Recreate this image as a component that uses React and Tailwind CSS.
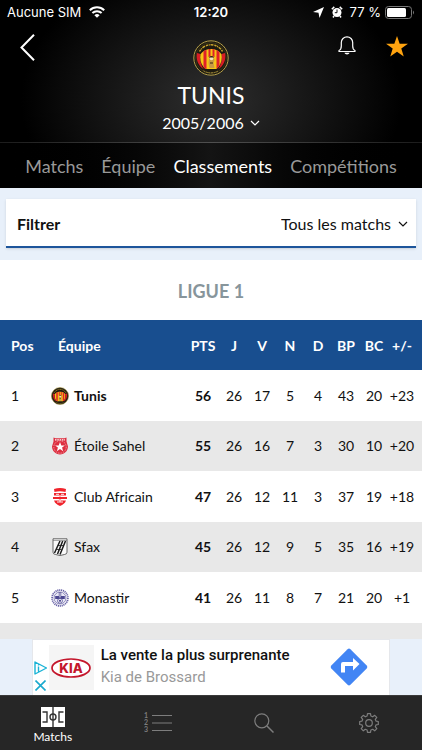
import React from "react";

const tabs = ["Matchs", "Équipe", "Classements", "Compétitions"];

const columns = ["PTS", "J", "V", "N", "D", "BP", "BC", "+/-"];

const TunisCrest = ({ className }) => (
  <svg viewBox="0 0 36 36" className={className} aria-hidden="true">
    <circle cx="18" cy="18" r="17.2" fill="#1d1a10" stroke="#b5a04a" strokeWidth="1" />
    <circle cx="18" cy="18" r="15.4" fill="none" stroke="#4d431d" strokeWidth="0.6" />
    {/* inscription around the shield */}
    <path d="M6.500 11.500a13.200 13.200 0 0 1 23 0" fill="none" stroke="#c9a52c" strokeWidth="1.500" strokeDasharray="2.2 0.7 1 0.8 3 0.9" />
    <path d="M10.500 30.800a14.600 14.600 0 0 0 15 0" fill="none" stroke="#a8903a" strokeWidth="1" strokeDasharray="2 0.6" />
    <path d="M4 13c-1.500 7 1.500 13 7 16.500-3-4-4.500-10-3.500-15.500zM32 13c1.500 7-1.500 13-7 16.500 3-4 4.500-10 3.500-15.500z" fill="#d91d24" />
    <clipPath id="tunis-shield">
      <path d="M7.500 14.500C10 10.500 14 9 18 9s8 1.500 10.500 5.500c1 6-1 11.500-5 14.500h-11C8.500 26 6.500 20.500 7.500 14.500z" />
    </clipPath>
    <g clipPath="url(#tunis-shield)">
      <rect x="6" y="8" width="24" height="22" fill="#f6c416" />
      <path d="M10.500 8h3v22h-3zM15.500 8h2v9h-2zM19.500 8h2v9h-2zM23.500 8h3v22h-3z" fill="#e0202a" />
      <path d="M16.500 16h4l1 4-1 3 1 5h-5l-1-5z" fill="#c99a45" />
      <circle cx="18.500" cy="18.500" r="1.800" fill="#f3e2c0" />
      <path d="M16 17.500c1-2 4-2 5 0zM17 22.500h3v1h-3z" fill="#3a2410" />
    </g>
  </svg>
);

const EtoileCrest = () => (
  <svg viewBox="0 0 18 18" className="size-[18px]" aria-hidden="true">
    <path d="M2.500.500l2 .8h9l2-.8v4l1.500 5c0 4.500-3.500 7.500-8 8-4.500-.5-8-3.500-8-8l1.500-5z" fill="#dd2f40" />
    <path d="M4 2.800h10" stroke="#fff" strokeWidth="1.200" strokeDasharray="1.500 0.800" />
    <circle cx="9" cy="10" r="6.200" fill="none" stroke="#f4b9be" strokeWidth="0.700" strokeDasharray="1.500 1" />
    <path d="M9 5l1.300 3.400h3.600l-2.800 2.200 1 3.600L9 12.100l-3.100 2.100 1-3.600-2.800-2.200h3.600z" fill="#fff" />
  </svg>
);

const AfricainCrest = () => (
  <svg viewBox="0 0 18 18" className="size-[18px]" aria-hidden="true">
    <path d="M3 1q6-2 12 0l-.5 3q-5.500-1.500-11 0zM3 5h12v2.500H3zM2 9h14v2H2zM3 12.500h12c-1 3-3 4-6 5.500-3-1.500-5-2.500-6-5.500z" fill="#f0242c" />
    <path d="M5 6.300h3M10 6.300h3M9 8v6M6 14h6" stroke="#fff" strokeWidth="0.900" />
    <circle cx="9" cy="10" r="1.500" fill="#f0242c" />
  </svg>
);

const SfaxCrest = () => (
  <svg viewBox="0 0 18 18" className="size-[18px]" aria-hidden="true">
    <path d="M2 .8h14v13.400q0 2-2.500 2.300L9 17.500l-4.500-1Q2 16.200 2 14.200z" fill="#fafafa" stroke="#444" strokeWidth="0.800" />
    <path d="M2 2.500h14" stroke="#555" strokeWidth="0.500" />
    <path d="M9 3L3.500 15M11.700 3L6.500 16M14.500 3L9 16.500" stroke="#1b1b1b" strokeWidth="1.500" />
    <path d="M7 7.500h5M5.500 11.500h5" stroke="#1b1b1b" strokeWidth="0.800" />
  </svg>
);

const MonastirCrest = () => (
  <svg viewBox="0 0 18 18" className="size-[18px]" aria-hidden="true">
    <circle cx="9" cy="9" r="7.900" fill="#fff" stroke="#6a64a8" strokeWidth="1.800" strokeDasharray="1.200 0.700" />
    <circle cx="9" cy="9" r="6" fill="#e9e8f6" stroke="#4a4590" strokeWidth="0.600" />
    <path d="M7.800 3h2.400v4h3.600v3H4.200V7h3.600z" fill="#4a4590" />
    <path d="M9 3.500v5" stroke="#fff" strokeWidth="0.900" />
    <circle cx="9" cy="11.800" r="2.400" fill="#fff" stroke="#4a4590" strokeWidth="0.800" />
    <path d="M9 10.600l1.200.9-.5 1.300H8.300l-.5-1.300z" fill="#4a4590" />
  </svg>
);

const teams = [
  { crest: <TunisCrest className="size-[18px]" />, name: "Tunis", stats: [56, 26, 17, 5, 4, 43, 20, "+23"], current: true },
  { crest: <EtoileCrest />, name: "Étoile Sahel", stats: [55, 26, 16, 7, 3, 30, 10, "+20"] },
  { crest: <AfricainCrest />, name: "Club Africain", stats: [47, 26, 12, 11, 3, 37, 19, "+18"] },
  { crest: <SfaxCrest />, name: "Sfax", stats: [45, 26, 12, 9, 5, 35, 16, "+19"] },
  { crest: <MonastirCrest />, name: "Monastir", stats: [41, 26, 11, 8, 7, 21, 20, "+1"] },
];

const Chevron = () => (
  <svg viewBox="0 0 10 6" className="w-[10px] h-[6px] shrink-0 pointer-events-none" fill="none" stroke="currentColor" strokeWidth="1.2" aria-hidden="true">
    <path d="M1 1l4 4 4-4" />
  </svg>
);

const StatusBar = () => (
  <div className="grid grid-cols-[1fr_auto_1fr] items-center h-6 px-[7px] font-['Inter',sans-serif] text-[13px] leading-4">
    <div className="flex items-center gap-2">
      <span>Aucune SIM</span>
      <svg viewBox="0 0 16 12" className="w-4 h-3" fill="none" stroke="#fff" strokeWidth="2" aria-hidden="true">
        <path d="M.8 4.300a10.300 10.300 0 0 1 14.400 0M3.400 7a6.600 6.600 0 0 1 9.200 0" />
        <path d="M8 11.800L5.400 9.200a3.700 3.700 0 0 1 5.200 0z" fill="#fff" stroke="none" />
      </svg>
    </div>
    <span className="font-semibold">12:20</span>
    <div className="flex items-center justify-end gap-[7px]">
      <svg viewBox="0 0 11 11" className="size-[11px]" fill="#fff" aria-hidden="true">
        <path d="M11 0L6.500 11 5.500 5.800 0 5z" />
      </svg>
      <svg viewBox="0 0 12 12" className="size-3" aria-hidden="true">
        <circle cx="6" cy="6.500" r="4.500" fill="#fff" />
        <path d="M.8 3.200L3.300.9M11.200 3.200L8.700.9M3 10l-1 1.500M9 10l1 1.500" stroke="#fff" strokeWidth="1.500" />
        <path d="M6 3.500v3.200H3.800" stroke="#111" strokeWidth="1" fill="none" />
      </svg>
      <span>77 %</span>
      <svg viewBox="0 0 30 13" className="w-[30px] h-[13px] -ml-[3px]" aria-hidden="true">
        <rect x=".5" y=".5" width="26" height="12" rx="3" fill="none" stroke="#777" />
        <rect x="2" y="2" width="19" height="9" rx="1.500" fill="#fff" />
        <path d="M28 4.500q2 2 0 4z" fill="#777" />
      </svg>
    </div>
  </div>
);

const Header = () => (
  <header className="bg-black bg-[radial-gradient(ellipse_190px_140px_at_50%_100px,#2e2e2e,#000)] text-white">
    <StatusBar />
    <div className="grid grid-cols-[82px_1fr_82px] h-[118px] px-3">
      <button type="button" aria-label="Retour" className="justify-self-start self-start p-2 pt-[10px]">
        <svg viewBox="0 0 15 27" className="w-[15px] h-[27px]" fill="none" stroke="#fff" strokeWidth="2" aria-hidden="true">
          <path d="M14 .7L1.500 13.500 14 26.300" />
        </svg>
      </button>
      <div className="flex flex-col items-center pt-4">
        <TunisCrest className="size-9" />
        <h1 className="mt-1 text-[23px] leading-[30px]">TUNIS</h1>
        <div className="relative flex items-center">
          <select aria-label="Saison" className="appearance-none field-sizing-content bg-transparent pr-[16px] text-base leading-[26px] outline-none">
            <option>2005/2006</option>
          </select>
          <span className="absolute right-0 pointer-events-none">
            <Chevron />
          </span>
        </div>
      </div>
      <div className="flex items-start justify-end gap-[30px] pt-3 pr-[2px]">
        <button type="button" aria-label="Notifications">
          <svg viewBox="0 0 18 20" className="w-[18px] h-5" fill="none" stroke="#fff" strokeWidth="1.200" aria-hidden="true">
            <path d="M1 15.500v-1c2-.8 2.300-2 2.300-4.500V6.500a5.700 5.700 0 0 1 11.400 0V10c0 2.500.3 3.700 2.300 4.500v1z" strokeLinejoin="round" />
            <path d="M6.500 16.800c.5 2.300 4.500 2.300 5 0z" fill="#fff" stroke="none" />
          </svg>
        </button>
        <button type="button" aria-label="Favori">
          <svg viewBox="0 0 24 23" className="w-[22px] h-[21px]" fill="#ffa30f" aria-hidden="true">
            <path d="M12 0l2.900 8.500H24l-7.300 5.300L19.400 22.500 12 17.200 4.600 22.500l2.700-8.700L0 8.500h9.100z" />
          </svg>
        </button>
      </div>
    </div>
    <div className="h-px bg-linear-to-r from-[#1c1c1c] via-[#505050] to-[#1c1c1c]" />
    <nav className="flex justify-center gap-[18px] h-[45px] bg-linear-to-r from-black via-[#141414] to-black text-lg leading-[46px] text-[#999]">
      {tabs.map((tab) => (
        <a key={tab} href="#" className={tab === "Classements" ? "text-white" : ""}>
          {tab}
        </a>
      ))}
    </nav>
  </header>
);

const FilterBar = () => (
  <div className="px-[6px] pt-[11px] pb-3">
    <div className="flex items-center justify-between h-[49px] pl-[11px] pr-2 pt-[2px] bg-white border-b-2 border-[#1d559b] shadow text-base">
      <label htmlFor="filter" className="font-bold">Filtrer</label>
      <div className="relative flex items-center">
        <select id="filter" className="appearance-none field-sizing-content bg-transparent pr-[17px] outline-none">
          <option>Tous les matchs</option>
        </select>
        <span className="absolute right-0 pointer-events-none">
          <Chevron />
        </span>
      </div>
    </div>
  </div>
);

const Standings = () => (
  <section className="bg-white">
    <h2 className="h-[60px] text-center text-lg leading-[62px] font-bold text-[#87959b]">LIGUE 1</h2>
    <table className="w-full table-fixed border-collapse text-sm">
      <colgroup>
        <col className="w-[51px]" />
        <col />
        <col className="w-[34px]" />
        <col className="w-7" />
        <col className="w-7" />
        <col className="w-7" />
        <col className="w-7" />
        <col className="w-7" />
        <col className="w-7" />
        <col className="w-[34px]" />
      </colgroup>
      <thead>
        <tr className="h-[50px] bg-[#184e8f] text-white">
          <th className="pl-[11px] pt-[2px] text-left font-bold">Pos</th>
          <th className="pl-[7px] pt-[2px] text-left font-bold">Équipe</th>
          {columns.map((column) => (
            <th key={column} className="pt-[2px] text-center font-bold last:pr-[6px]">{column}</th>
          ))}
        </tr>
      </thead>
      <tbody>
        {teams.map((team, index) => (
          <tr key={team.name} className="h-[51px] even:h-[50px] even:bg-[#e8e8e8]">
            <td className="pl-[11px]">{index + 1}</td>
            <td>
              <div className="flex items-center gap-[5px]">
                {team.crest}
                <span className={team.current ? "font-bold" : ""}>{team.name}</span>
              </div>
            </td>
            {team.stats.map((value, i) => (
              <td key={i} className="text-center whitespace-nowrap nth-3:font-bold last:pr-[6px]">
                {value}
              </td>
            ))}
          </tr>
        ))}
      </tbody>
    </table>
  </section>
);

const AdBanner = () => (
  <aside className="flex justify-center h-14 bg-[#e8f0fa] font-['Roboto',sans-serif]">
    <a href="#" className="flex items-center w-[85%] bg-white border border-b-0 border-gray-200">
      <span className="flex flex-col items-center gap-[5px] w-4 pt-4 shrink-0">
        <svg viewBox="0 0 13 14" className="w-[13px] h-[14px]" fill="none" stroke="#19b3d6" strokeWidth="1.400" aria-hidden="true">
          <path d="M1 1l11.500 6L1 13zM4.500 5.500v5M4.500 3.500v1" strokeLinejoin="round" />
        </svg>
        <svg viewBox="0 0 11 11" className="size-[11px]" stroke="#19a9ce" strokeWidth="1.600" aria-hidden="true">
          <path d="M.5.500l10 10M10.500.500l-10 10" />
        </svg>
      </span>
      <span className="flex items-center justify-center size-[45px] shrink-0 bg-[#f5f5f5]">
        <svg viewBox="0 0 40 20" className="w-10 h-5" aria-label="KIA">
          <ellipse cx="20" cy="10" rx="19" ry="9" fill="#fff" stroke="#c4172c" strokeWidth="1.700" />
          <text x="20" y="14.500" textAnchor="middle" fontFamily="Inter, sans-serif" fontWeight="800" fontSize="13" fill="#c4172c">KIA</text>
        </svg>
      </span>
      <span className="flex-1 min-w-0 pl-[7px] pb-[3px] whitespace-nowrap">
        <span className="block text-[15px] leading-[22px] font-medium">La vente la plus surprenante</span>
        <span className="block text-[15px] leading-[22px] text-[#999]">Kia de Brossard</span>
      </span>
      <svg viewBox="0 0 40 40" className="size-10 mr-[20px] mb-[2px] shrink-0" aria-hidden="true">
        <rect x="6.500" y="6.500" width="27" height="27" rx="2" transform="rotate(45 20 20)" fill="#4285f4" />
        <path d="M12 25.500v-8.500q0-2 2-2h10v-4l6.500 6-6.500 6.500v-4.500h-8v6.500z" fill="#fff" />
      </svg>
    </a>
  </aside>
);

const BottomNav = () => (
  <nav className="grid grid-cols-4 h-[55px] bg-[#262626] border-t border-[#3a3a3a] text-[#7d7d7d]">
    <button type="button" className="flex flex-col items-center pt-[11px] text-xs leading-4 text-white">
      <svg viewBox="0 0 24 20" className="w-6 h-5 mb-[2px]" aria-hidden="true">
        <rect width="24" height="20" fill="#fff" />
        <g fill="none" stroke="#333" strokeWidth="1.400">
          <path d="M12 0v20M1.500 5H6v10H1.500M22.500 5H18v10h4.500" />
          <circle cx="12" cy="10" r="3" />
        </g>
      </svg>
      Matchs
    </button>
    <button type="button" aria-label="Classements" className="flex items-start justify-center pt-4">
      <svg viewBox="0 0 28 21" className="w-7 h-[21px]" aria-hidden="true">
        <g fill="currentColor" fontFamily="Lato, sans-serif" fontSize="7" fontWeight="700">
          <text x="0" y="6">1</text>
          <text x="0" y="13">2</text>
          <text x="0" y="20">3</text>
        </g>
        <path d="M8 3.500h20M8 11h20M8 18.500h20" stroke="currentColor" />
      </svg>
    </button>
    <button type="button" aria-label="Rechercher" className="flex items-start justify-center pt-[17px]">
      <svg viewBox="0 0 20 20" className="size-5" fill="none" stroke="currentColor" strokeWidth="1.200" aria-hidden="true">
        <circle cx="7.800" cy="7.800" r="7" />
        <path d="M13 13l6.500 6.500" strokeWidth="1.500" />
      </svg>
    </button>
    <button type="button" aria-label="Réglages" className="flex items-start justify-center pt-[17px]">
      <svg viewBox="0 0 20 20" className="size-5" fill="none" stroke="currentColor" strokeWidth="1.200" strokeLinejoin="round" aria-hidden="true">
        <path d="M8.500.700h3l.4 2.300 1.800.8 2-1.500 2.100 2.100-1.500 2 .7 1.700 2.300.4v3l-2.300.4-.7 1.800 1.500 2-2.100 2.100-2-1.500-1.800.7-.4 2.300h-3l-.4-2.300-1.800-.7-2 1.500-2.100-2.100 1.500-2-.7-1.800L.700 11.500v-3L3 8.100l.7-1.700-1.500-2 2.100-2.100 2 1.500L8.100 3z" />
        <circle cx="10" cy="10" r="3.300" />
      </svg>
    </button>
  </nav>
);

const App = () => {
  return (
    <div className="flex flex-col min-h-screen bg-[#e8f0fa] font-['Lato',sans-serif] text-[#111]">
      <Header />
      <main className="flex flex-col flex-1">
        <FilterBar />
        <Standings />
        {/* start of the next striped row */}
        <div className="flex-1 bg-[#e8e8e8]" />
      </main>
      <AdBanner />
      <BottomNav />
    </div>
  );
};

export default App;
